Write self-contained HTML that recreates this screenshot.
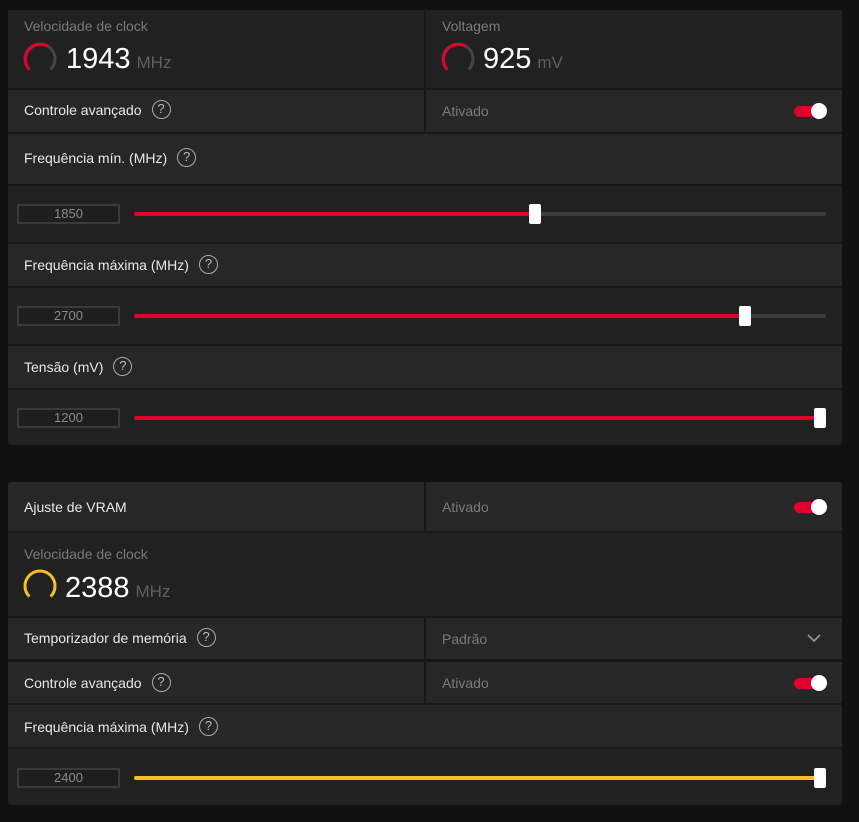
<!DOCTYPE html>
<html><head><meta charset="utf-8"><style>
*{margin:0;padding:0;box-sizing:border-box}
body{width:859px;height:822px;background:#111;font-family:"Liberation Sans",sans-serif;position:relative;overflow:hidden}
.b{position:absolute}
.c1{background:#212121}.c2{background:#272727}
.t{position:absolute;font-size:14px;color:#e8e8e8;white-space:nowrap}
.g{color:#7a7a7a}
.q{display:inline-block;width:19px;height:19px;border:1.5px solid #aaa;border-radius:50%;font-size:13px;color:#bbb;text-align:center;line-height:16px;vertical-align:middle;margin-left:10px;margin-top:-3px}
.inp{position:absolute;left:17px;width:103px;height:20px;border:2px solid #3a3a3a;background:#1e1e1e;color:#8a8a8a;font-size:13px;text-align:center;line-height:16px}
.tr{position:absolute;left:134px;width:692px;height:4px;background:#3d3d3d;border-radius:2px}
.fl{position:absolute;left:0;top:0;height:4px;border-radius:2px}
.th{position:absolute;top:-8px;width:12px;height:20px;background:#fff;border-radius:2px}
.tg{position:absolute;width:33px;height:16px}
.tg i{position:absolute;left:0;top:3px;width:28px;height:11px;background:#e0002b;border-radius:6px}
.tg b{position:absolute;right:0;top:0;width:16px;height:16px;background:#fff;border-radius:50%}
.big{font-size:29px;color:#fff}
.un{font-size:17px;color:#5f5f5f;margin-left:6px}
</style></head><body>
<div class="b" style="left:8px;top:10px;width:834px;height:435px;background:#181818;border-radius:3px"></div>
<div class="b c1" style="left:8px;top:10px;width:416px;height:78px"></div>
<div class="b c1" style="left:426px;top:10px;width:416px;height:78px"></div>
<div class="t g" style="left:24px;top:18px;font-size:14px">Velocidade de clock</div>
<div class="t g" style="left:442px;top:18px">Voltagem</div>
<svg class="b" style="left:0;top:0" width="859" height="100">
<path d="M29.4 69.6 A15 15 0 1 1 50.6 69.6" fill="none" stroke="#444" stroke-width="3"/>
<path d="M29.4 69.6 A15 15 0 0 1 48 46.5" fill="none" stroke="#e0002b" stroke-width="3"/>
<path d="M447.4 69.6 A15 15 0 1 1 468.6 69.6" fill="none" stroke="#444" stroke-width="3"/>
<path d="M447.4 69.6 A15 15 0 0 1 466 46.5" fill="none" stroke="#e0002b" stroke-width="3"/>
</svg>
<div class="t" style="left:66px;top:43px"><span class="big">1943</span><span class="un">MHz</span></div>
<div class="t" style="left:483px;top:43px"><span class="big">925</span><span class="un">mV</span></div>
<div class="b c2" style="left:8px;top:90px;width:416px;height:42px"></div>
<div class="b c2" style="left:426px;top:90px;width:416px;height:42px"></div>
<div class="t" style="left:24px;top:102px">Controle avançado<span class="q">?</span></div>
<div class="t g" style="left:442px;top:103px">Ativado</div>
<div class="tg" style="left:794px;top:103px"><i></i><b></b></div>

<div class="b c2" style="left:8px;top:134px;width:834px;height:50px"></div>
<div class="t" style="left:24px;top:150px">Frequência mín. (MHz)<span class="q">?</span></div>
<div class="b c1" style="left:8px;top:186px;width:834px;height:56px"></div>
<div class="inp" style="top:204px">1850</div>
<div class="tr" style="top:212px"><div class="fl" style="width:401px;background:#e0002b"></div><div class="th" style="left:395px"></div></div>

<div class="b c2" style="left:8px;top:244px;width:834px;height:42px"></div>
<div class="t" style="left:24px;top:257px">Frequência máxima (MHz)<span class="q">?</span></div>
<div class="b c1" style="left:8px;top:288px;width:834px;height:56px"></div>
<div class="inp" style="top:306px">2700</div>
<div class="tr" style="top:314px"><div class="fl" style="width:611px;background:#e0002b"></div><div class="th" style="left:605px"></div></div>

<div class="b c2" style="left:8px;top:346px;width:834px;height:42px"></div>
<div class="t" style="left:24px;top:359px">Tensão (mV)<span class="q">?</span></div>
<div class="b c1" style="left:8px;top:390px;width:834px;height:55px;border-radius:0 0 3px 3px"></div>
<div class="inp" style="top:408px">1200</div>
<div class="tr" style="top:416px"><div class="fl" style="width:692px;background:#e0002b"></div><div class="th" style="left:680px"></div></div>

<div class="b" style="left:8px;top:482px;width:834px;height:323px;background:#181818;border-radius:3px"></div>
<div class="b c2" style="left:8px;top:482px;width:416px;height:49px;border-radius:3px 0 0 0"></div>
<div class="b c2" style="left:426px;top:482px;width:416px;height:49px;border-radius:0 3px 0 0"></div>
<div class="t" style="left:24px;top:499px">Ajuste de VRAM</div>
<div class="t g" style="left:442px;top:499px">Ativado</div>
<div class="tg" style="left:794px;top:499px"><i></i><b></b></div>

<div class="b c1" style="left:8px;top:533px;width:834px;height:83px"></div>
<div class="t g" style="left:24px;top:546px">Velocidade de clock</div>
<svg class="b" style="left:0;top:567px" width="80" height="50">
<path d="M29.4 29.6 A15 15 0 1 1 50.6 29.6" fill="none" stroke="#f5c024" stroke-width="3"/>
</svg>
<div class="t" style="left:65px;top:572px"><span class="big">2388</span><span class="un">MHz</span></div>

<div class="b c2" style="left:8px;top:618px;width:416px;height:41px"></div>
<div class="b c2" style="left:426px;top:618px;width:416px;height:41px"></div>
<div class="t" style="left:24px;top:630px">Temporizador de memória<span class="q">?</span></div>
<div class="t g" style="left:442px;top:631px">Padrão</div>
<svg class="b" style="left:806px;top:633px" width="16" height="10"><path d="M2 2 L8 8 L14 2" fill="none" stroke="#999" stroke-width="1.6"/></svg>

<div class="b c2" style="left:8px;top:662px;width:416px;height:41px"></div>
<div class="b c2" style="left:426px;top:662px;width:416px;height:41px"></div>
<div class="t" style="left:24px;top:675px">Controle avançado<span class="q">?</span></div>
<div class="t g" style="left:442px;top:675px">Ativado</div>
<div class="tg" style="left:794px;top:675px"><i></i><b></b></div>

<div class="b c2" style="left:8px;top:705px;width:834px;height:42px"></div>
<div class="t" style="left:24px;top:719px">Frequência máxima (MHz)<span class="q">?</span></div>
<div class="b c1" style="left:8px;top:749px;width:834px;height:56px;border-radius:0 0 3px 3px"></div>
<div class="inp" style="top:768px">2400</div>
<div class="tr" style="top:776px"><div class="fl" style="width:692px;background:#f5c024"></div><div class="th" style="left:680px"></div></div>
</body></html>
